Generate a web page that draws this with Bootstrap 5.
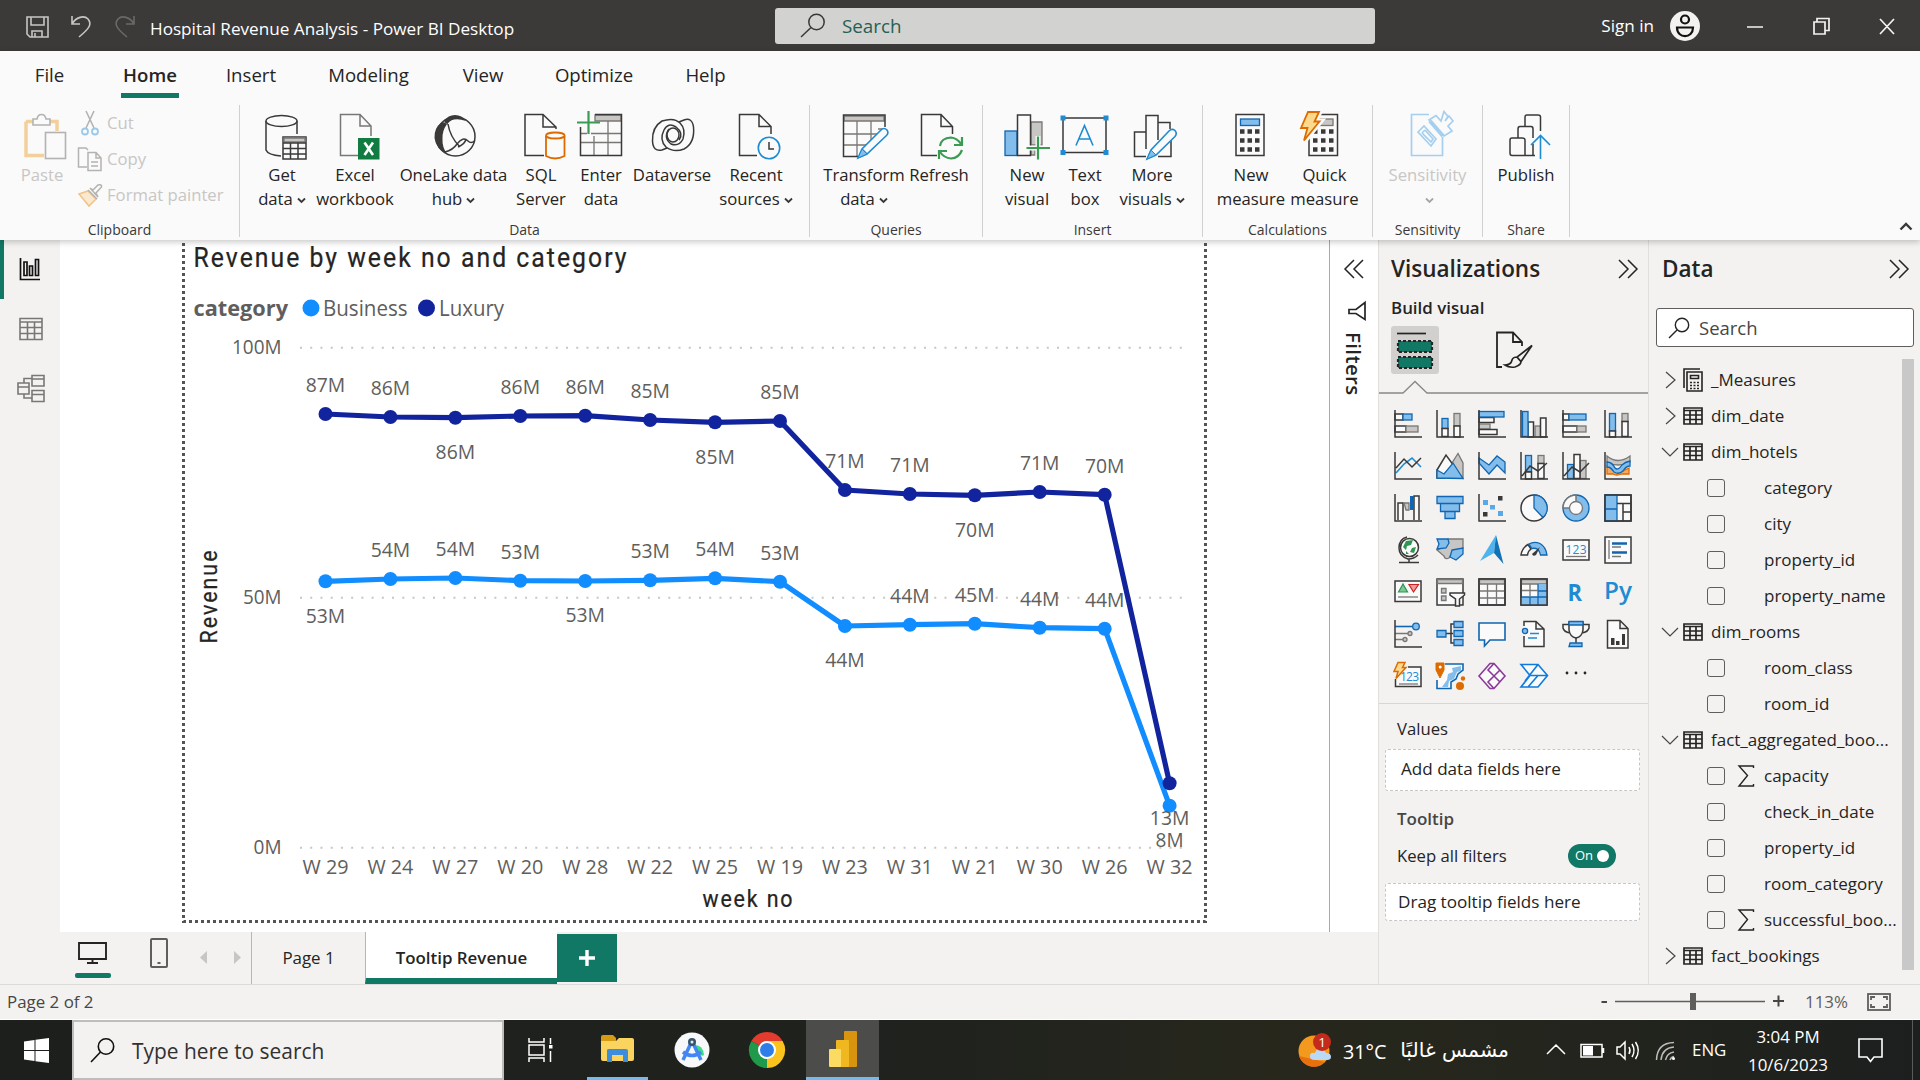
<!DOCTYPE html>
<html lang="en">
<head>
<meta charset="utf-8">
<meta name="viewport" content="width=device-width, initial-scale=1">
<title>Hospital Revenue Analysis - Power BI Desktop</title>
<link href="https://cdn.jsdelivr.net/npm/bootstrap@5.3.0/dist/css/bootstrap.min.css" rel="stylesheet">
<style>
:root{--green:#117865;--pane:#f3f2f1;--ink:#252423;--edge:#e1dfdd}
body{width:1920px;height:1080px;overflow:hidden;font-family:"Open Sans","Noto Sans",sans-serif;font-size:16.7px;line-height:1.2;color:var(--ink);background:var(--pane)}
svg{display:block;flex:none;overflow:visible}
.k{fill:none;stroke:#3a3938;stroke-width:1.5}
.kf{fill:#fafafa;stroke:#3a3938;stroke-width:1.5}
.kd{fill:#3a3938}
.b{fill:#83bdec;stroke:#1066b0;stroke-width:1.3}
.bl{fill:none;stroke:#1e8bd2;stroke-width:1.6}
.bw{fill:#fafafa;stroke:#1e8bd2;stroke-width:1.6}
.g{fill:#c8c6c4;stroke:#797774;stroke-width:1.3}
.gl{fill:none;stroke:#797774;stroke-width:1.3}
.gr{fill:none;stroke:#3a9b52;stroke-width:2.2}
.or{fill:#fafafa;stroke:#dd6b00;stroke-width:1.8}
.titlebar{height:51px;background:#3b3a39;color:#fff}
.doc-name{margin-left:14px;width:625px;font-size:17.15px;padding-top:8px;white-space:nowrap}
.title-search{width:600px;height:36px;background:#d2d2d0;border-radius:3px;color:#265f55;font-size:18.8px;margin-top:1px}
.ribbon{height:189px;background:#fafafa;box-shadow:0 2px 6px rgba(0,0,0,.22);position:relative;z-index:3}
.menu-tabs{height:54px;font-size:18.6px}
.menu-tabs .nav-link{padding:12px 0 0;color:var(--ink);height:47px;line-height:24px;white-space:nowrap;display:flex;justify-content:center}
.menu-tabs .nav-link.active{font-weight:600;border-bottom:5px solid var(--green)}
.rgroup{height:132px;border-right:1px solid #d2d0ce}
.rgroup .tools{height:115px}
.rgroup .caption{font-size:14px;line-height:20px;text-align:center;color:#3a3938}
.tool{text-align:center;white-space:nowrap;line-height:24px;padding-top:2px}
.tool>span{display:flex;justify-content:center;align-items:center;height:24px}
.tool .cv{margin:3px 0 0 4px}
.tool.nudge>span{padding-left:4px}
.faded{color:#c8c6c4}
.clip-row{height:36px;color:#c8c6c4}
.clip-row span{padding-top:1px}
.rail{width:60px}
.rail .slot{height:59px}
.rail .slot.on{border-left:4px solid var(--green)}
.canvas{width:1269px;height:692px;background:#fff}
.filters{width:49px;height:692px;background:#fff;border-left:1px solid #a8a8a8}
.filters .vtext{writing-mode:vertical-rl;font-size:20.4px;letter-spacing:.4px;font-weight:600;line-height:24px}
.tabs-row{height:52px}
.pg{height:52px;border-left:1px solid #b8b6b4;font-size:16.9px}
.pg.active{background:#fff;border-bottom:6px solid var(--green);font-weight:600;padding-top:6px}
.plus{width:60px;height:48px;background:var(--green);margin-top:2px}
.viz{width:270px;border-left:1px solid var(--edge)}
.fields{width:272px;border-left:1px solid var(--edge)}
.pane-title{font-size:22.5px;font-weight:600;line-height:30px}
.pick{width:48px;height:48px;border-radius:3px}
.pick.on{background:#d2d0ce}
.gallery{display:grid;grid-template-columns:repeat(6,28px);grid-auto-rows:28px;align-content:start;gap:14px;padding:12px 0 0 15px;height:299px}
.gallery text{font-family:"Open Sans",sans-serif;fill:#1e8bd2}
.well{border:1.5px dashed #c8c6c4;background:#fff;border-radius:3px;margin:0 8px 0 6px;font-size:17.1px}
.toggle{width:48px;height:24px;border-radius:12px;background:var(--green);color:#fff;font-size:13px}
.knob{width:12px;height:12px;border-radius:50%;background:#fff}
.find{height:39px;border:1px solid #605e5c;border-radius:3px;background:#fff;color:#484644;font-size:18.5px;margin:0 6px 0 7px}
.tree{padding-top:15px}
.tree .node{height:36px;font-size:17px;white-space:nowrap}
.cbx{width:18px;height:18px;border:1px solid #605e5c;border-radius:3px}
.thumb{width:12px;height:611px;background:#c8c8c8;margin:12px 6px 0 0}
.status{height:36px;border-top:1px solid #dddbd9;border-bottom:1px solid #fff;font-size:16.9px;color:#484644}
.taskbar{height:60px;background:linear-gradient(90deg,#1d1f1c,#20221e 50%,#27271c 66%,#24251d 80%,#1c1f1e);color:#fff}
.tb-search{width:432px;height:60px;background:var(--pane);border:2px solid #bdbdbb;color:#323130;font-size:20.9px}
.app{width:75px;height:60px}
.app.run{border-bottom:3px solid #76b9ed}
.app.front{width:73px;background:#4c4d4a;border-bottom:3px solid #76b9ed}
</style>
</head>
<body class="d-flex flex-column">

<!-- title bar -->
<header class="titlebar d-flex align-items-center flex-shrink-0">
  <svg width="112" height="30" viewBox="24 11 112 30" style="margin-left:24px" fill="none" stroke="#c8c6c4" stroke-width="1.6"><path d="M27 17H48V37H30L27 34ZM31 17V25H44V17M32 37V31H42V37M35 37V33"/><path d="M72 16V24H80M72 24C76 17 84 15 88 19C92 24 90 28 79 37"/><path stroke="#6a6967" d="M134 16V24H126M134 24C130 17 122 15 118 19C114 24 116 28 127 37"/></svg>
  <div class="doc-name">Hospital Revenue Analysis - Power BI Desktop</div>
  <div class="title-search d-flex align-items-center">
    <svg width="26" height="26" viewBox="0 0 26 26" class="k" style="margin-left:25px"><circle cx="16.500" cy="9" r="7.700"/><path d="M11 14.500L1 24"/></svg>
    <span class="ms-3" style="padding-top:1px">Search</span>
  </div>
  <div class="ms-auto d-flex align-items-center pe-4">
    <span style="padding-top:2px;font-size:17.100px">Sign in</span>
    <svg class="ms-3" width="30" height="30" viewBox="0 0 30 30"><circle cx="15" cy="15" r="15" fill="#f3f2f1"/><g fill="none" stroke="#111" stroke-width="2.200"><circle cx="15" cy="8.500" r="4"/><path d="M7 16.500H23C23 28 7 28 7 16.500Z"/></g></svg>
    <svg style="margin-left:46px" width="150" height="18" viewBox="1746 19 150 18" fill="none" stroke="#f3f2f1" stroke-width="1.700"><path d="M1747 29H1763M1814 24H1825V36H1814ZM1817 24V20.500H1829V32.500H1825M1880 21L1894 36M1894 21L1880 36"/></svg>
  </div>
</header>

<!-- ribbon -->
<section class="ribbon flex-shrink-0">
  <nav class="menu-tabs nav flex-nowrap">
    <a class="nav-link" style="margin-left:34px;width:31px">File</a>
    <a class="nav-link active" style="margin-left:56px;width:58px">Home</a>
    <a class="nav-link" style="margin-left:46px;width:52px">Insert</a>
    <a class="nav-link" style="margin-left:47px;width:89px">Modeling</a>
    <a class="nav-link" style="margin-left:48px;width:44px">View</a>
    <a class="nav-link" style="margin-left:47px;width:84px">Optimize</a>
    <a class="nav-link" style="margin-left:48px;width:43px">Help</a>
  </nav>
  <div class="d-flex">
    <div class="rgroup" style="width:240px">
      <div class="tools d-flex">
        <div class="tool faded" style="width:58px;margin-left:13px">
          <svg width="52" height="56" viewBox="16 107 52 56" style="margin-left:3px"><path d="M26 121.500H57V131M44 155.500H26V121.500" fill="none" stroke="#f3cf9c" stroke-width="3.500"/><path d="M33 125V119H37C38 113 45 113 46 119H50V125Z" fill="#fafafa" stroke="#b5b3b1" stroke-width="1.600"/><rect x="45.500" y="132.500" width="20" height="26" fill="#fafafa" stroke="#b5b3b1" stroke-width="1.600"/></svg>
          <span>Paste</span>
        </div>
        <div style="margin-left:7px">
          <div class="clip-row d-flex align-items-center"><svg width="24" height="26" viewBox="78 110 24 26"><g fill="none" stroke="#b5b3b1" stroke-width="1.600"><path d="M86 111L94 128M94 111L86 128"/></g><g fill="none" stroke="#9cc8ea" stroke-width="1.800"><circle cx="85" cy="131.500" r="3"/><circle cx="95" cy="131.500" r="3"/></g></svg><span style="margin-left:5px">Cut</span></div>
          <div class="clip-row d-flex align-items-center"><svg width="24" height="26" viewBox="78 146 24 26"><path d="M87 167H78.500V148H86L88 150M88 152.500H96L101 158V170.500H88ZM96 152.500V158H101M91 162H98M91 166H98" fill="none" stroke="#b5b3b1" stroke-width="1.500"/></svg><span style="margin-left:5px">Copy</span></div>
          <div class="clip-row d-flex align-items-center"><svg width="24" height="24" viewBox="78 182 24 24"><path d="M79 193L88 190L96 198L89 205Z" fill="#fbe9cf" stroke="#f0c48a" stroke-width="1.600"/><path d="M88 189L97 198M90 187L98 196L96 192L101.500 186Q102 183 98 184L93 189Z" fill="#fafafa" stroke="#b5b3b1" stroke-width="1.500"/></svg><span style="margin-left:5px">Format painter</span></div>
        </div>
      </div>
      <div class="caption">Clipboard</div>
    </div>

    <div class="rgroup" style="width:570px">
      <div class="tools d-flex" style="padding-left:6px">
        <div class="tool" style="width:72px"><svg class="mx-auto" width="52" height="56" viewBox="0 0 52 56"><path class="k" d="M41 27V14M10 14V43Q12 48 25 49"/><ellipse class="kf" cx="25.500" cy="14" rx="15.500" ry="5.500"/><rect class="kf" x="27" y="30" width="23" height="22"/><path class="g" d="M28 31H49V35H28Z"/><path class="k" d="M27 36H50M27 41.500H50M27 47H50M34.500 36V52M42 36V52"/></svg><span>Get</span><span>data<svg class="cv" width="9" height="7" viewBox="0 0 9 7"><path d="M1 1.500L4.500 5L8 1.500" fill="none" stroke="#3a3938" stroke-width="1.800"/></svg></span></div>
        <div class="tool" style="width:74px"><svg class="mx-auto" width="52" height="56" viewBox="0 0 52 56"><path d="M29 48.500H11.500V7.500H31L42 19V29M31 7.500V19H42" fill="none" stroke="#797774" stroke-width="1.500"/><rect x="29" y="31" width="21.500" height="21.500" fill="#107c41"/><path d="M35.500 35.500L44 48M44 35.500L35.500 48" stroke="#fff" stroke-width="2.600"/></svg><span>Excel</span><span>workbook</span></div>
        <div class="tool" style="width:123px"><svg class="mx-auto" width="52" height="56" viewBox="0 0 52 56"><circle class="kf" cx="27.500" cy="29.500" r="19.500"/><path class="kd" d="M13 16Q6 21 6.500 31Q8 42 19 47Q14 40 14.500 32Q14 24 19 17Q16 14 13 16ZM16 14Q20 8 27 8Q34 8 38 14Q31 11.500 26 12.500Q21 13.500 19 18Z"/><path class="k" d="M20 17Q22 30 32 40M17 45Q25 43 29 37Q35 29 40 34Q43 37 46.500 34M30 40Q37 37 38 32"/></svg><span>OneLake data</span><span>hub<svg class="cv" width="9" height="7" viewBox="0 0 9 7"><path d="M1 1.500L4.500 5L8 1.500" fill="none" stroke="#3a3938" stroke-width="1.800"/></svg></span></div>
        <div class="tool" style="width:52px"><svg class="mx-auto" width="52" height="56" viewBox="0 0 52 56"><path class="kf" d="M29 48.500H10V7.500H28L41 20V22M28 7.500V20H41"/><path class="or" d="M31 29V49Q40 54 49.500 49V29"/><ellipse class="or" cx="40.300" cy="28.500" rx="9.300" ry="3"/></svg><span>SQL</span><span>Server</span></div>
        <div class="tool" style="width:68px"><svg class="mx-auto" width="52" height="56" viewBox="0 0 52 56"><path class="g" d="M20 8H46V14H20Z"/><path class="gl" d="M6 35.500H47M16 26.500H47M19 29V48M33 14V48M6 26.500H12"/><path class="k" stroke-width="2" d="M20 7.500H46.500V48.500H5.500V20"/><path class="gr" d="M13.500 4V27M2 15.500H25"/></svg><span>Enter</span><span>data</span></div>
        <div class="tool" style="width:74px"><svg class="mx-auto" width="52" height="56" viewBox="0 0 52 56"><path class="k" d="M38 13Q46 10 47.500 20Q49 36 38 42Q28 46 20 40Q13 33 18 23Q22 15 30 20Q38 26 33 33M16 43Q7 45 6.500 34Q6 20 16 14Q28 10 34 16Q40 22 37 32Q33 40 25 37Q17 31 23 22M33 15L38 13M16 43L21 41"/><ellipse class="k" cx="27" cy="28" rx="6" ry="7"/></svg><span>Dataverse</span></div>
        <div class="tool nudge" style="width:90px"><svg class="mx-auto" width="52" height="56" viewBox="0 0 52 56"><path class="kf" d="M29 48.500H11.500V7.500H31L43 19.500V27M31 7.500V19.500H43"/><circle class="bw" cx="41" cy="41" r="10.700"/><path class="k" d="M41 35V42H46"/></svg><span>Recent</span><span>sources<svg class="cv" width="9" height="7" viewBox="0 0 9 7"><path d="M1 1.500L4.500 5L8 1.500" fill="none" stroke="#3a3938" stroke-width="1.800"/></svg></span></div>
      </div>
      <div class="caption">Data</div>
    </div>

    <div class="rgroup" style="width:173px">
      <div class="tools d-flex" style="padding-left:14px">
        <div class="tool" style="width:80px"><svg class="mx-auto" width="52" height="56" viewBox="0 0 52 56"><path class="g" d="M6 9H46V14H6Z"/><path class="gl" d="M5 27H42M5 38H30M19 14V49M33 14V34M40 22H46"/><path class="k" d="M47 20V8H5.500V49.500H20"/><path class="bw" d="M20 51L24 42L43 23Q46 20 49 23Q51 26 48.500 28.500L29 47ZM24 42L29 47"/><path d="M20 51L24 42L29 47Z" fill="#83bdec" stroke="#1e8bd2"/></svg><span>Transform</span><span>data<svg class="cv" width="9" height="7" viewBox="0 0 9 7"><path d="M1 1.500L4.500 5L8 1.500" fill="none" stroke="#3a3938" stroke-width="1.800"/></svg></span></div>
        <div class="tool" style="width:70px"><svg class="mx-auto" width="52" height="56" viewBox="0 0 52 56"><path class="kf" d="M24 48.500H8.500V7.500H28L39.500 19.500V27M28 7.500V19.500H39.500"/><path class="gr" stroke-width="2" d="M27 39Q28 31 38 30.500Q44 31 48 37M49 30V38H41M49 43Q46 51 38 51.500Q31 51 27 45M26 52V44H34"/></svg><span>Refresh</span></div>
      </div>
      <div class="caption">Queries</div>
    </div>

    <div class="rgroup" style="width:220px">
      <div class="tools d-flex" style="padding-left:12px">
        <div class="tool nudge" style="width:60px"><svg class="mx-auto" width="52" height="56" viewBox="0 0 52 56"><rect class="b" x="6" y="24" width="12" height="24.500"/><path class="g" d="M32 15H43V38H32Z"/><path class="g" stroke="none" d="M32 42H36V48H32Z"/><rect class="kf" x="18.500" y="8" width="13" height="40.500"/><path d="M39 29V53M26 41H52" stroke="#fafafa" stroke-width="5"/><path class="gr" d="M39 29.500V52.500M27.500 41H51"/></svg><span>New</span><span>visual</span></div>
        <div class="tool" style="width:60px"><svg class="mx-auto" width="52" height="56" viewBox="0 0 52 56"><rect class="k" x="4" y="11" width="43" height="34.500"/><path fill="#1e8bd2" d="M1.500 8.500H6.500V13.500H1.500ZM44.500 8.500H49.500V13.500H44.500ZM1.500 43H6.500V48H1.500ZM44.500 43H49.500V48H44.500Z"/><path class="bl" stroke-width="2" d="M17 38.500L25.500 18.500L34 38.500M20 32H31"/></svg><span>Text</span><span>box</span></div>
        <div class="tool" style="width:74px"><svg class="mx-auto" width="52" height="56" viewBox="0 0 52 56"><path class="k" d="M20 49.500H8.500V25H20M20 40V8.500H32V33M32 15.500H44V22M20 25V42M45 32V49.500H32"/><path class="bw" d="M21 52L25 43L43 24Q46 21 49 23.500Q51.500 26.500 49 29.500L30 48Z"/><path d="M21 52L25 43L30 48Z" fill="#83bdec" stroke="#1e8bd2"/></svg><span>More</span><span>visuals<svg class="cv" width="9" height="7" viewBox="0 0 9 7"><path d="M1 1.500L4.500 5L8 1.500" fill="none" stroke="#3a3938" stroke-width="1.800"/></svg></span></div>
      </div>
      <div class="caption">Insert</div>
    </div>

    <div class="rgroup" style="width:170px">
      <div class="tools d-flex" style="padding-left:11px">
        <div class="tool" style="width:74px"><svg class="mx-auto" width="52" height="56" viewBox="0 0 52 56"><rect class="kf" x="11" y="7.500" width="28" height="41"/><rect class="b" x="15.500" y="12" width="19" height="6.500"/><path d="M15 24.500H35M15 33.500H35M15 42.500H35" stroke="#3a3938" stroke-width="4.500" stroke-dasharray="4.500 3"/></svg><span>New</span><span>measure</span></div>
        <div class="tool" style="width:73px"><svg class="mx-auto" width="52" height="56" viewBox="0 0 52 56"><rect class="kf" x="10" y="7.500" width="28.500" height="41"/><rect class="g" x="17" y="12" width="17" height="6.500"/><path d="M14 24.500H35M14 33.500H35M14 42.500H35" stroke="#3a3938" stroke-width="4.500" stroke-dasharray="4.500 3.500"/><path d="M9 5H21L16.500 14H22L5 35L8.500 21H2Z" fill="#fcd98c" stroke="#fafafa" stroke-width="5"/><path d="M9 5H20L15.500 14.500H20.500L5 33.500L8.500 21H2Z" fill="#fcd98c" stroke="#dd6b00" stroke-width="1.800"/></svg><span>Quick</span><span>measure</span></div>
      </div>
      <div class="caption">Calculations</div>
    </div>

    <div class="rgroup" style="width:110px">
      <div class="tools d-flex justify-content-center">
        <div class="tool faded" style="width:80px"><svg class="mx-auto" width="52" height="56" viewBox="0 0 52 56" fill="none" stroke="#a5cfee" stroke-width="1.700"><path d="M27 7.500H9.500V48.500H40.500V30"/><path d="M16 25L22 19L34 32L29 39ZM20 26L23 23M20 26L29 35L31 32L23 23"/><path d="M34 8.500L39 14L42 4.500L46 9.500L43 14L47 9L51 14L46 19L50 24L42 29L27 13Z"/><path d="M28 14L41 29" stroke-width="4"/></svg><span>Sensitivity</span><span><svg class="cv" width="9" height="7" viewBox="0 0 9 7"><path d="M1 1.500L4.500 5L8 1.500" fill="none" stroke="#a8a6a4" stroke-width="1.800"/></svg></span></div>
      </div>
      <div class="caption">Sensitivity</div>
    </div>

    <div class="rgroup" style="width:87px">
      <div class="tools d-flex justify-content-center">
        <div class="tool" style="width:80px"><svg class="mx-auto" width="52" height="56" viewBox="0 0 52 56"><path class="k" stroke-width="2" d="M35 48.500H12Q10 48.500 10 46V33Q10 31 12 31H22Q25 31 25 33V48M18 31V22Q18 19.500 20 19.500H31Q33 19.500 33 22V31M33 37V48M25 19.500V10Q25 8 27 8H38Q40.500 8 40.500 10V24"/><path class="bl" stroke-width="2" d="M40.500 52V29M31 38L40.500 28.500L50 38"/></svg><span>Publish</span></div>
      </div>
      <div class="caption">Share</div>
    </div>
    <svg class="ms-auto align-self-end" width="14" height="9" viewBox="0 0 14 9" style="margin:0 7px 6px 0"><path d="M1.500 7.500L7 2L12.500 7.500" fill="none" stroke="#3a3938" stroke-width="2.400"/></svg>
  </div>
</section>

<!-- workspace -->
<main class="d-flex" style="height:744px">
  <aside class="rail">
    <div class="slot on d-flex align-items-center"><svg width="24" height="24" viewBox="0 0 24 24" style="margin:-2px 0 0 15px"><path d="M1.500 1V22.500H21M5 5H8V18.500H5ZM10.500 9H13.500V18.500H10.500ZM16.500 2.500H19.500V18.500H16.500Z" fill="none" stroke="#111" stroke-width="1.700"/></svg></div>
    <div class="slot d-flex align-items-center"><svg width="24" height="24" viewBox="0 0 24 24" style="margin-left:19px"><path d="M1 1.500H23V22.500H1ZM1 5H23M1 10.500H23M1 16.500H23M8.500 5V22.500M15.500 5V22.500" fill="none" stroke="#797774" stroke-width="1.600"/></svg></div>
    <div class="slot d-flex align-items-center"><svg width="28" height="28" viewBox="0 0 28 28" style="margin-left:17px"><path d="M15 1.500H27V12H15ZM15 5H27M15 16.500H27V27.500H15ZM15 20.500H27M1 9H12V20H1ZM1 13H12M7 9V4.500H15M7 20V24H15" fill="none" stroke="#797774" stroke-width="1.600"/></svg></div>
  </aside>

  <div class="d-flex flex-column" style="width:1318px">
    <div class="d-flex">
      <div class="canvas">
        <svg id="chart" width="1269" height="692" viewBox="60 240 1269 692" font-family="Open Sans, Noto Sans, sans-serif"></svg>
      </div>
      <aside class="filters d-flex flex-column align-items-center">
        <svg width="20" height="20" viewBox="0 0 20 20" style="margin:19px 0 0 0"><path d="M10 1L1 10L10 19M19 1L10 10L19 19" fill="none" stroke="#252423" stroke-width="1.500"/></svg>
        <svg width="18" height="20" viewBox="0 0 18 20" style="margin:22px 0 0 6px"><path d="M17 1.500V18.500L8 12.500H1V8.500H8Z" fill="none" stroke="#252423" stroke-width="1.700"/></svg>
        <div class="vtext" style="margin-top:11px">Filters</div>
      </aside>
    </div>
    <div class="tabs-row d-flex">
      <div style="width:66px;padding:10px 0 0 15px"><svg width="36" height="36" viewBox="75 942 36 36"><path d="M79 943H106V959H79ZM92.500 959V962.500M87 963H98" fill="none" stroke="#252423" stroke-width="1.900"/><rect x="75" y="973" width="36" height="5" rx="2" fill="#117865"/></svg></div>
      <div style="width:67px;padding:6px 0 0 24px"><svg width="18" height="30" viewBox="0 0 18 30"><rect x="1" y="1" width="16" height="28" rx="1" fill="none" stroke="#605e5c" stroke-width="2"/><path d="M7.500 25H10.500" stroke="#605e5c" stroke-width="2"/></svg></div>
      <div style="width:58px;padding:19px 0 0 7px"><svg width="42" height="14" viewBox="0 0 42 14" fill="#c8c6c4"><path d="M7 0V13L0 6.500ZM34 0V13L41 6.500Z"/></svg></div>
      <div class="pg d-flex align-items-center justify-content-center" style="width:114px">Page 1</div>
      <div class="pg active d-flex align-items-center justify-content-center" style="width:192px">Tooltip Revenue</div>
      <div class="plus d-flex align-items-center justify-content-center"><svg width="16" height="16" viewBox="0 0 16 16"><path d="M8 0V16M0 8H16" stroke="#fff" stroke-width="3.400"/></svg></div>
    </div>
  </div>

  <aside class="viz">
    <div class="d-flex justify-content-between align-items-center" style="padding:14px 10px 0 12px"><span class="pane-title">Visualizations</span><svg width="20" height="20" viewBox="0 0 20 20"><path d="M1 1L10 10L1 19M10 1L19 10L10 19" fill="none" stroke="#252423" stroke-width="1.500"/></svg></div>
    <div style="padding:12px 0 0 12px;font-size:16.900px;line-height:24px;font-weight:600">Build visual</div>
    <div class="d-flex" style="padding:6px 0 0 12px;height:55px">
      <div class="pick on d-flex align-items-center justify-content-center"><svg width="36" height="37" viewBox="0 0 36 37"><path d="M0 1.500H29" stroke="#252423" stroke-width="1.700"/><g fill="#117865" stroke="#252423" stroke-width="2.200" stroke-dasharray="3 2"><rect x="1" y="9" width="34" height="11"/><rect x="1" y="25" width="34" height="11"/></g></svg></div>
      <div class="pick d-flex align-items-center justify-content-center" style="margin-left:51px"><svg width="38" height="38" viewBox="0 0 38 38"><path d="M7 36H2V1.500H18L27 11V15M18 1.500V11H27" fill="none" stroke="#252423" stroke-width="1.800"/><path d="M37 14.500L22 26L26 30.500ZM22 26Q18 26 17 29Q16 34 10 34Q14 37 20 36Q26 34 26 30.500" fill="#f3f2f1" stroke="#252423" stroke-width="1.700"/></svg></div>
    </div>
    <svg width="269" height="14" viewBox="0 0 269 14" style="margin-top:5px"><path d="M0 13H24L36 1.500L48 13H269" fill="none" stroke="#8a8886" stroke-width="1.300"/></svg>
    <div class="gallery" style="margin-top:4px" id="gallery">
      <svg viewBox="0 0 28 28"><rect class="kf" x="1" y="4" width="8" height="6"/><rect class="b" x="9" y="4" width="9" height="6"/><rect class="kf" x="1" y="16" width="11" height="6"/><rect class="g" x="12" y="16" width="12" height="6"/><path class="k" d="M1 0V27H28"/></svg>
      <svg viewBox="0 0 28 28"><rect class="b" x="6" y="8.500" width="6" height="10"/><rect class="kf" x="6" y="18.500" width="6" height="8"/><rect class="g" x="18" y="3.500" width="6" height="12.500"/><rect class="kf" x="18" y="16" width="6" height="11"/><path class="k" d="M1 0V27H28"/></svg>
      <svg viewBox="0 0 28 28"><rect class="kf" x="1" y="7.500" width="15" height="5"/><rect class="g" x="1" y="14" width="11" height="5"/><rect class="kf" x="1" y="19.500" width="18" height="5"/><rect class="b" x="1" y="1.500" width="25" height="5.500"/><path class="k" d="M1 0V27H28"/></svg>
      <svg viewBox="0 0 28 28"><rect class="kf" x="8" y="12" width="5.500" height="15"/><rect class="g" x="15" y="16" width="5.500" height="11"/><rect class="kf" x="20.500" y="8" width="5.500" height="19"/><rect class="b" x="2.500" y="1.500" width="5.500" height="25"/><path class="k" d="M1 0V27H28"/></svg>
      <svg viewBox="0 0 28 28"><rect class="kf" x="1" y="4" width="6" height="6"/><rect class="b" x="7" y="4" width="17" height="6"/><rect class="kf" x="1" y="16" width="14" height="6"/><rect class="g" x="15" y="16" width="9" height="6"/><path class="k" d="M1 0V27H28"/></svg>
      <svg viewBox="0 0 28 28"><rect class="b" x="5.500" y="3.500" width="6" height="17.500"/><rect class="kf" x="5.500" y="21" width="6" height="6"/><rect class="g" x="18" y="3.500" width="6" height="8"/><rect class="kf" x="18" y="11.500" width="6" height="15"/><path class="k" d="M1 0V27H28"/></svg>

      <svg viewBox="0 0 28 28"><path class="bl" d="M2 21L10 12L18 6L27 15"/><path class="k" d="M2 16L10 7L18 15L27 6M1 0V27H28"/></svg>
      <svg viewBox="0 0 28 28"><path class="g" d="M14 14L22 1.500L27 11V26Z"/><path class="kf" d="M1 18L10 3L18 14L9 26L1 26Z"/><path class="b" d="M1 26V18L8 22L17 11L27 26.500Z"/></svg>
      <svg viewBox="0 0 28 28"><path class="b" d="M1 6L11 13L19 4L27 10V21L19 13L11 22L1 11Z"/><path class="k" d="M1 0V27H28"/></svg>
      <svg viewBox="0 0 28 28"><rect class="b" x="5.500" y="3.500" width="6" height="16"/><rect class="kf" x="5.500" y="20" width="6" height="7"/><rect class="g" x="18" y="3.500" width="6" height="8"/><rect class="kf" x="18" y="11.500" width="6" height="15"/><path class="k" d="M2 24L10 14L18 19L27 11M1 0V27H28"/></svg>
      <svg viewBox="0 0 28 28"><rect class="g" x="18" y="8.500" width="6" height="18"/><rect class="b" x="5.500" y="12.500" width="6" height="14"/><rect class="kf" x="12" y="2.500" width="6" height="24"/><path class="k" d="M2 24L10 15L18 20L27 11M1 0V27H28"/></svg>
      <svg viewBox="0 0 28 28"><path d="M3 14H9Q13 21 17 20L25 16V22H18Q12 24 9 22H3Z" fill="#f5a860" stroke="#dd6b00" stroke-width="1.300"/><path class="g" d="M3 4Q14 13 26 4V10Q14 16 3 10Z"/><path class="b" d="M3 10Q8 10 11 16Q14 19 18 13Q21 10 26 9V14Q22 14 19 19Q15 23 10 20Q7 15 3 15Z"/><path class="k" d="M1 0V27H28"/></svg>

      <svg viewBox="0 0 28 28"><path class="kf" d="M4 26V9H9V26M20 26V2H25V26"/><path class="g" d="M10 9H15V16H12Z"/><rect x="16" y="2" width="4" height="14" fill="#1066b0"/><path class="k" d="M1 0V27H28"/></svg>
      <svg viewBox="0 0 28 28"><path class="b" d="M1 2.500H27V9.500H1ZM4.500 9.500H23.500V17.500H4.500ZM9 17.500H19V24.500H9Z"/></svg>
      <svg viewBox="0 0 28 28"><path class="k" d="M1 0V27H28"/><path class="kd" d="M20 2H24.500V6.500H20ZM5 18H9.500V22.500H5Z"/><path fill="#5aa8e6" d="M5 6H10V11H5ZM12 11H17V15.500H12ZM20 17H25V22H20Z"/></svg>
      <svg viewBox="0 0 28 28"><circle class="kf" cx="14" cy="14" r="13"/><path class="b" d="M14 1A13 13 0 0 1 23 23.500L14 14Z"/></svg>
      <svg viewBox="0 0 28 28"><circle class="b" cx="14" cy="14" r="13"/><path class="kf" d="M14 1V8A6 6 0 0 0 8 14H1A13 13 0 0 1 14 1Z" style="stroke:#797774"/><circle cx="14" cy="14" r="6.500" fill="#fafafa" stroke="#797774" stroke-width="1.300"/></svg>
      <svg viewBox="0 0 28 28"><rect class="kf" x="1" y="1" width="26" height="26"/><path class="b" d="M1 1H13V27H1ZM1 15H13"/><path class="k" d="M13 9.500H27M19 9.500V27M19 18H27M1 1H27V27H1Z"/></svg>

      <svg viewBox="0 0 28 28"><circle class="kf" cx="15.500" cy="11.500" r="9"/><path d="M12 5L19 4L17 9L13 10L12 14L9 11ZM18 12L22 11L20 17L16 16ZM12 15L15 18L12 18Z" fill="#2e9650"/><path class="k" d="M13 1Q5 3 5 12Q5 20 14 23Q20 23 24 19M15 23V26.500M5 26.500H25"/></svg>
      <svg viewBox="0 0 28 28"><path class="g" d="M12 3H27V12L18 15L13 22Q9 24 8 20L1 14L8 11Z"/><path class="b" d="M1 3H12L13 7L10 12L1 13L3 8ZM16 14L27 12V18L20 24L14 21Z"/></svg>
      <svg viewBox="0 0 28 28"><path d="M18 -1L2 25L16 17Z" fill="#4fb4ee"/><path d="M18 -1L16 17L25.500 28Z" fill="#1272b8"/></svg>
      <svg viewBox="0 0 28 28"><path class="kf" d="M1 19Q2 12 8 8.500L11 13Q8 15 7.500 19Z"/><path class="b" d="M9 8Q14 5 20 7.500Q26 11 27 19H20.500Q19 11 12 12.500Z"/><path class="kd" d="M20 11L16 19Q13 21 12 18Z"/></svg>
      <svg viewBox="0 0 28 28"><rect class="kf" x="1" y="4" width="26" height="20"/><text x="3.500" y="17.500" font-size="12" textLength="21">123</text><path class="gl" d="M4 20.500H24"/></svg>
      <svg viewBox="0 0 28 28"><rect class="kf" x="1" y="1" width="26" height="26"/><path class="gl" d="M5 4V23M8 11H17M8 20.500H17"/><path d="M8 7.500H23M8 16.500H23" stroke="#1066b0" stroke-width="2.500"/></svg>

      <svg viewBox="0 0 28 28"><rect class="kf" x="1" y="3" width="26" height="20.500"/><path d="M4.500 14L9 6L13.500 14Z" fill="#7fc796" stroke="#2e9650" stroke-width="1.200"/><path d="M15 6.500H24.500L19.500 14Z" fill="#f19a9a" stroke="#c92222" stroke-width="1.200"/><path class="gl" d="M4 19H24"/></svg>
      <svg viewBox="0 0 28 28"><rect class="kf" x="1" y="1" width="26" height="26"/><path class="g" d="M1.500 1.500H26.500V5.500H1.500ZM5.500 10.500H10V15H5.500ZM5.500 18H10V22.500H5.500Z"/><path class="kf" d="M14 15H28.500V17L23.500 21V28H19.500V21L14 17Z"/></svg>
      <svg viewBox="0 0 28 28"><rect class="kf" x="1" y="1" width="26" height="26"/><path class="g" d="M1.500 1.500H26.500V6H1.500Z"/><path class="gl" d="M1 13H27M1 20H27M9.500 6V27M18.500 6V27"/><path class="k" d="M1 1H27V27H1Z"/></svg>
      <svg viewBox="0 0 28 28"><rect class="kf" x="1" y="1" width="26" height="26"/><path class="g" d="M1.500 1.500H26.500V6H1.500Z"/><path fill="#83bdec" d="M18 6H27V27H1V19H18Z"/><path d="M18 6V27M10 19V27M1 19H27M18 13H27" stroke="#1066b0" stroke-width="1.300"/><path class="gl" d="M1 12.500H18M10 6V19"/><path class="k" d="M1 1H27V27H1Z"/></svg>
      <svg viewBox="0 0 28 28"><text x="5.500" y="22.500" font-size="24" font-weight="700" textLength="14.500" lengthAdjust="spacingAndGlyphs">R</text></svg>
      <svg viewBox="0 0 28 28"><text x="0" y="21" font-size="24" font-weight="600" textLength="28" lengthAdjust="spacingAndGlyphs">Py</text></svg>

      <svg viewBox="0 0 28 28"><path d="M1 6.500H19" stroke="#1066b0" stroke-width="1.600"/><circle class="b" cx="22" cy="6.500" r="3.300"/><path class="gl" d="M1 13.500H14M1 19.500H9"/><circle class="g" cx="16" cy="13.500" r="2"/><circle class="g" cx="11" cy="19.500" r="2"/><path class="k" d="M1 0V27H28"/></svg>
      <svg viewBox="0 0 28 28"><path class="k" d="M10 13.500H17M18 4H15V23H18"/><path class="b" d="M1 10.500H10V17H1ZM18 1.500H27V7.500H18ZM18 10.500H27V16.500H18ZM18 19.500H27V25.500H18Z"/></svg>
      <svg viewBox="0 0 28 28"><path d="M1 3H27V20H12L6.500 26V20H1Z" fill="#fafafa" stroke="#1066b0" stroke-width="1.600"/></svg>
      <svg viewBox="0 0 28 28"><path class="kf" d="M4 6V1.500H16L24 9V26.500H4V16M16 1.500V9H24"/><circle class="b" cx="5" cy="11" r="2.600"/><path class="bl" d="M10 13.500H19M8 18H17"/></svg>
      <svg viewBox="0 0 28 28"><path class="kf" d="M7 2H21V10Q20 17 14 18Q8 17 7 10ZM7 4.500H1V8Q2 12 8 13M21 4.500H27V8Q26 12 20 13"/><path class="b" d="M7 1.500H21V5H7Z"/><path class="k" stroke-width="3" d="M14 18V23"/><path class="b" d="M8 23H20V26.500H7Z"/></svg>
      <svg viewBox="0 0 28 28"><path class="kf" d="M3.500 0.500H16L24 8.500V28H3.500ZM16 0.500V8.500H24"/><path class="kd" d="M7 18H10.500V25H7ZM12 21H15.500V25H12ZM18 14H21V25H18Z"/></svg>

      <svg viewBox="0 0 28 28"><path class="kf" d="M14 5H27V24.500H1.500V17"/><text x="6" y="18.500" font-size="12" textLength="19">123</text><path class="gl" d="M5 22H24"/><path d="M4 0.500H11L8.500 5.500H12L2 16.500L4 9.500H0Z" fill="#fcd98c" stroke="#dd6b00" stroke-width="1.500"/></svg>
      <svg viewBox="0 0 28 28"><path d="M9 2H27V8L22 12L20 17L15 20V26.500H1V18" fill="#fafafa" stroke="#1066b0" stroke-width="1.600"/><path d="M16 6L25 4V9L21 10L18 17L13 19L12 25H6L11 18L12 12L17 10Z" fill="#83bdec"/><path d="M4 16L0 8V1H8V8Z" fill="#dd6b00" stroke="#dd6b00" stroke-linejoin="round"/><circle cx="4.200" cy="5" r="1.500" fill="#fff"/><circle cx="24" cy="24" r="4" fill="#dd6b00"/><circle cx="27" cy="16.500" r="2.200" fill="#dd6b00"/></svg>
      <svg viewBox="0 0 28 28"><path d="M12 1.500L1 14L12 26.500H16L27 14L16 1.500ZM16 1.500L10 8L22 20M22 8L10 20L16 26.500M10 8L16 14" fill="#fafafa" stroke="#8b3a9b" stroke-width="1.600"/></svg>
      <svg viewBox="0 0 28 28"><path d="M1 2.500H18L27.500 13.500L18 25H1L10 13.500ZM10 13.500H27M5 19L18 2.500M8 25L18 13.500" fill="#fafafa" stroke="#0f7bdc" stroke-width="1.600"/></svg>
      <svg viewBox="0 0 28 28" fill="#252423"><circle cx="5" cy="11" r="1.400"/><circle cx="14" cy="11" r="1.400"/><circle cx="23" cy="11" r="1.400"/></svg>
    </div>
    <div style="border-top:1px solid #d8d6d4;margin-top:6px;padding:14px 0 9px 18px;height:46px;line-height:22px">Values</div>
    <div class="well d-flex align-items-center" style="height:42px;padding:0 0 2px 15px">Add data fields here</div>
    <div style="padding:17px 0 0 18px;font-size:17px;line-height:22px;font-weight:600;color:#484644">Tooltip</div>
    <div class="d-flex align-items-center" style="padding:14px 32px 15px 18px"><span>Keep all filters</span><div class="toggle ms-auto d-flex align-items-center justify-content-between" style="padding:0 7px"><span>On</span><span class="knob"></span></div></div>
    <div class="well d-flex align-items-center" style="height:38px;padding-left:12px">Drag tooltip fields here</div>
  </aside>

  <aside class="fields">
    <div class="d-flex justify-content-between align-items-center" style="padding:14px 11px 0 13px"><span class="pane-title">Data</span><svg width="20" height="20" viewBox="0 0 20 20"><path d="M1 1L10 10L1 19M10 1L19 10L10 19" fill="none" stroke="#252423" stroke-width="1.500"/></svg></div>
    <div class="find d-flex align-items-center" style="margin-top:24px"><svg width="22" height="22" viewBox="0 0 22 22" style="margin-left:11px"><circle cx="14" cy="8" r="6.700" fill="none" stroke="#252423" stroke-width="1.400"/><path d="M9 13L1 21" stroke="#252423" stroke-width="1.400"/></svg><span style="margin-left:9px;padding-top:2px">Search</span></div>
    <div class="d-flex justify-content-between">
      <div class="tree" id="tree"></div>
      <div class="thumb"></div>
    </div>
  </aside>
</main>

<!-- status bar -->
<footer class="status d-flex align-items-center flex-shrink-0">
  <span style="margin-left:7px">Page 2 of 2</span>
  <svg class="ms-auto" width="186" height="20" viewBox="1600 993 186 20"><path d="M1601.500 1003H1607M1773 1002H1784M1778.500 996.500V1007.500" stroke="#484644" stroke-width="2"/><path d="M1615 1002.500H1765" stroke="#605e5c" stroke-width="1.300"/><rect x="1690" y="994" width="6" height="17" fill="#605e5c"/></svg>
  <span style="width:63px;text-align:center;margin-left:9px;color:#605e5c">113%</span>
  <svg width="24" height="18" viewBox="0 0 24 18" style="margin:0 29px 0 9px"><rect x="1" y="1" width="22" height="16" fill="none" stroke="#605e5c" stroke-width="1.800"/><path d="M4 7V4H8M16 4H20V7M20 11V14H16M8 14H4V11" fill="none" stroke="#605e5c" stroke-width="1.800"/></svg>
</footer>

<!-- Windows taskbar -->
<footer class="taskbar d-flex align-items-center flex-shrink-0">
  <div class="d-flex justify-content-center" style="width:72px"><svg width="25" height="25" viewBox="0 0 25 25" fill="#fff"><path d="M0 3.500L10.500 2V12H0ZM11.500 1.800L25 0V12H11.500ZM0 13H10.500V23L0 21.500ZM11.500 13H25V25L11.500 23.200Z"/></svg></div>
  <div class="tb-search d-flex align-items-center"><svg width="25" height="25" viewBox="0 0 25 25" style="margin-left:16px"><circle cx="16" cy="8.500" r="7.700" fill="none" stroke="#111" stroke-width="1.600"/><path d="M10.500 14L1 24" stroke="#111" stroke-width="1.600"/></svg><span style="margin-left:17px;padding-top:3px">Type here to search</span></div>
  <div class="app d-flex align-items-center justify-content-center" style="width:83px;padding-right:11px"><svg width="25" height="24" viewBox="0 0 25 24"><path d="M1 0V4H16V0M1 7H16V17H1ZM1 24V20H16V24M22.500 0V6M22.500 13V24" fill="none" stroke="#fff" stroke-width="1.500"/><rect x="21" y="7" width="3.500" height="3.500" fill="#fff"/></svg></div>
  <div class="app run d-flex align-items-center justify-content-center" style="width:61px"><svg width="33" height="28" viewBox="0 0 33 28"><path d="M0 2Q0 0 2 0H12L15 3V8H0Z" fill="#d79a12"/><path d="M0 6H15L18 3H31Q33 3 33 5V24Q33 26 31 26H2Q0 26 0 24Z" fill="#fbd35f"/><path d="M6 15Q6 14 8 14H25Q27 14 27 16V27H22V20H11V27H6Z" fill="#3c8ddb"/></svg></div>
  <div class="app d-flex align-items-center justify-content-center" style="width:88px"><svg width="36" height="36" viewBox="0 0 36 36"><circle cx="18" cy="18" r="17.500" fill="#f6f8fa"/><path d="M21 13Q29 13 30 23Q28 25 25 22Z" fill="#3ddc84"/><path d="M18 9L9 28M18 9L27 28M9 20Q18 27 27 20" fill="none" stroke="#4285f4" stroke-width="3.500"/><circle cx="18" cy="10" r="4" fill="#37536b"/><circle cx="18" cy="10" r="1.500" fill="#dcebfb"/></svg></div>
  <div class="app d-flex align-items-center justify-content-center" style="width:61px"><svg width="36" height="36" viewBox="0 0 36 36"><path d="M18 18L2.400 9A18 18 0 0 1 33.600 9Z" fill="#e33b2e"/><path d="M18 18L33.600 9A18 18 0 0 1 18 36Z" fill="#fcc31e"/><path d="M18 18L18 36A18 18 0 0 1 2.400 9Z" fill="#1f9a4b"/><path d="M18 9H33.600L25.800 22.500L18 36L20 24Z" fill="#fcc31e"/><circle cx="18" cy="18" r="9" fill="#fff"/><circle cx="18" cy="18" r="7" fill="#2f7de9"/></svg></div>
  <div class="app front d-flex align-items-center justify-content-center" style="margin-left:9px"><svg width="28" height="36" viewBox="0 0 28 36"><rect x="15" y="0" width="13" height="36" rx="1" fill="#d8930f"/><rect x="7" y="9" width="13" height="27" rx="1" fill="#f0b820"/><rect x="0" y="18" width="12" height="18" rx="1" fill="#fbdb62"/></svg></div>
  <div class="ms-auto d-flex align-items-center" style="padding-right:7px">
    <svg width="34" height="36" viewBox="1299 1031 34 36"><circle cx="1315" cy="1050" r="15.500" fill="#f39a1e"/><path d="M1300 1055A15.500 15.500 0 0 0 1326 1061Z" fill="#e8700f"/><path d="M1316 1059Q1310 1059 1311 1054Q1312 1051 1316 1052Q1318 1046 1324 1049Q1327 1050 1327 1052Q1332 1052 1332 1056Q1332 1059 1328 1059Z" fill="#b9d9f7"/><circle cx="1323" cy="1041" r="9" fill="#c42b1c"/><text x="1323" y="1046" text-anchor="middle" font-size="13.500" fill="#fff" font-family="Open Sans">1</text></svg>
    <span style="width:56px;margin-left:11px;font-size:19.800px;padding-top:3px">31°C</span>
    <span dir="rtl" lang="ar" style="width:110px;margin-left:0;font-family:'DejaVu Sans',sans-serif;font-size:20.400px;padding-top:0;white-space:nowrap">مشمس غالبًا</span>
    <svg style="margin-left:37px" width="130" height="24" viewBox="1546 1038 130 24" fill="none" stroke="#fff" stroke-width="1.500"><path d="M1547 1054L1556 1045L1565 1054M1581 1044.500H1602V1057H1581ZM1603.500 1048V1053"/><path d="M1583 1046H1593V1055.500H1583Z" fill="#fff" stroke="none"/><path d="M1617 1047H1620L1625 1042V1059L1620 1054H1617ZM1629 1047Q1631 1050.500 1629 1054M1632 1044Q1636 1050.500 1632 1057M1635.500 1042Q1641 1050.500 1635.500 1059"/><path stroke="#bdbdbb" d="M1656.500 1060Q1657 1043 1674 1042.500M1661 1060Q1662 1048 1674 1047M1665.500 1060Q1667 1053 1674 1052M1670 1060Q1671 1057 1674 1056.500"/><circle cx="1673.500" cy="1058.500" r="1.500" fill="#fff" stroke="none"/></svg>
    <span style="width:34px;margin-left:16px;font-size:16.900px;padding-top:1px">ENG</span>
    <div class="text-center" style="width:100px;margin-left:12px;line-height:28px;padding-top:1px;font-size:16.900px">3:04 PM<br>10/6/2023</div>
    <svg style="margin-left:20px" width="25" height="25" viewBox="0 0 25 25"><path d="M1 1H24V19H16L12.500 23.500L9 19H1Z" fill="none" stroke="#fff" stroke-width="1.600"/></svg>
    <div style="width:1px;height:60px;background:#5a5b58;margin-left:29px"></div>
  </div>
</footer>

<script>
// Line chart: pixel heights of each series by week.
const weeks=[29,24,27,20,28,22,25,19,23,31,21,30,26,32];
const series=[
 {color:'#118dff',y:[581.3,579,578,580.7,581,580.3,578.3,581.7,626,624.7,623.7,627.7,628.7,805.7],t:[53,54,54,53,53,53,54,53,44,44,45,44,44,8],below:[0,4,8,13]},
 {color:'#12239e',y:[414,417,417.7,416,415.7,420,422.3,421,490,494,495.3,492,494.7,783.3],t:[87,86,86,86,86,85,85,85,71,71,70,71,70,13],below:[2,6,10,13]}
];
const px=i=>325.5+i*64.93;
const txt=(s,x,y,size,w,extra='')=>`<text x="${x}" y="${y}" font-size="${size}" textLength="${w}" lengthAdjust="spacingAndGlyphs" ${extra}>${s}</text>`;
// Narrow, widely tracked lettering for the chart's titles.
const title=(s,at,size,w)=>`<text transform="${at} scale(.9 1)" font-size="${size}" textLength="${w/.9}" lengthAdjust="spacing" font-family="Roboto" fill="#252423" stroke="#252423" stroke-width=".25">${s}</text>`;
let c='<path d="M183.500 237V921.500H1205.500V237" fill="none" stroke="#555453" stroke-width="3" stroke-dasharray="3 3"/>';
for(const y of [347.7,597.8,847.7]) c+=`<path d="M300 ${y}H1190" stroke="#c8c6c4" stroke-width="2" stroke-dasharray="2 8.230"/>`;
c+=title('Revenue by week no and category','translate(193.500 266.500)',27.5,433);
c+=title('week no','translate(702.500 906.500)',23.8,90);
c+=title('Revenue','translate(216.500 643.500) rotate(-90)',23.8,93);
c+='<g fill="#605e5c">'+txt('category',193.5,315.5,21.5,94.5,'font-weight="700"')+txt('Business',323,315.5,21.5,84.5)+txt('Luxury',439,315.5,21.5,65)+'</g>';
c+='<circle cx="311" cy="308" r="8.500" fill="#118dff"/><circle cx="426.500" cy="308" r="8.500" fill="#12239e"/>';
c+='<g fill="#605e5c">'+txt('100M',232,353.7,19.2,49.5)+txt('50M',243,603.7,19.2,38.5)+txt('0M',253.5,853.7,19.2,28);
weeks.forEach((w,i)=>c+=txt('W '+w,px(i)-23,874,19.2,46));
c+='</g>';
for(const s of series){
 c+=`<polyline points="${s.y.map((y,i)=>px(i)+','+y).join(' ')}" fill="none" stroke="${s.color}" stroke-width="5.200" stroke-linejoin="round"/>`;
 s.y.forEach((y,i)=>c+=`<circle cx="${px(i)}" cy="${y}" r="7" fill="${s.color}"/>`);
}
c+='<g fill="#605e5c">';
for(const s of series) s.t.forEach((v,i)=>{const w=v<10?28:39.5;c+=txt(v+'M',px(i)-w/2,s.y[i]+(s.below.includes(i)?41.3:-22.2),19.2,w);});
document.getElementById('chart').innerHTML=c+'</g>';

// Field tree: [label, kind]; > closed table, v open table, f field, s summed field.
const nodes=[['_Measures','m'],['dim_date','>'],['dim_hotels','v'],['category','f'],['city','f'],['property_id','f'],['property_name','f'],['dim_rooms','v'],['room_class','f'],['room_id','f'],['fact_aggregated_boo...','v'],['capacity','s'],['check_in_date','f'],['property_id','f'],['room_category','f'],['successful_boo...','s'],['fact_bookings','>']];
const tableIcon='<svg width="20" height="18" viewBox="0 0 20 18"><path d="M1 1H19V17H1ZM1 3.500H19M1 8H19M1 12.500H19M7 4V17M13 4V17" fill="none" stroke="#252423" stroke-width="1.700"/></svg>';
const measureIcon='<svg width="20" height="24" viewBox="0 0 20 24" ><path d="M1 20V1H17M4 4H19V23H4ZM7.500 7.500H15.500V10.500H7.500Z" fill="none" stroke="#252423" stroke-width="1.600"/><path d="M7 14.500H17M7 17.500H17M7 20.500H17" stroke="#252423" stroke-width="1.600" stroke-dasharray="2 1.500"/></svg>';
const arrow=o=>`<svg width="18" height="18" viewBox="0 0 18 18" style="margin:0 4px 0 12px"><path d="${o?'M1 5L9 13L17 5':'M5 1L14 9L5 17'}" fill="none" stroke="#484644" stroke-width="1.200"/></svg>`;
document.getElementById('tree').innerHTML=nodes.map(([t,k])=>{
 if(k==='f'||k==='s') return `<div class="node d-flex align-items-center"><span class="cbx" style="margin-left:58px"></span><svg width="16" height="22" viewBox="0 0 16 22" style="margin:0 10px 0 13px"><path d="${k==='s'?'M15.500 3V1H1L9.500 10.500L1 21H15.500V19':''}" fill="none" stroke="#252423" stroke-width="1.400"/></svg><span>${t}</span></div>`;
 return `<div class="node d-flex align-items-center">${arrow(k==='v')}${k==='m'?measureIcon:tableIcon}<span style="margin-left:8px">${t}</span></div>`;
}).join('');
</script>
<script src="https://cdn.jsdelivr.net/npm/bootstrap@5.3.0/dist/js/bootstrap.bundle.min.js"></script>
</body>
</html>
